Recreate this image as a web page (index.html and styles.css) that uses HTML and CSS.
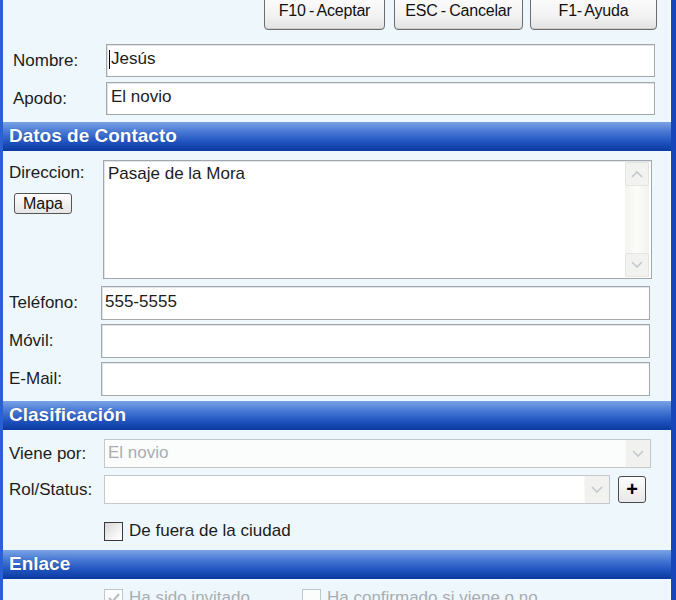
FILE: index.html
```html
<!DOCTYPE html>
<html lang="es">
<head>
    <meta charset="UTF-8">
    <title>Invitado</title>
    <link rel="stylesheet" href="styles.css">
</head>
<body>
<div class="window">
    <!-- barra de botones -->
    <div class="toolbar">
        <button class="btn btn-ok">F10 - Aceptar</button>
        <button class="btn btn-cancel">ESC - Cancelar</button>
        <button class="btn btn-help">F1- Ayuda</button>
    </div>

    <div class="section top">
        <div class="row">
            <span class="label">Nombre:</span>
            <div class="field"><span class="caret"></span>Jesús</div>
        </div>
        <div class="row">
            <span class="label">Apodo:</span>
            <div class="field">El novio</div>
        </div>
    </div>

    <div class="header header-contact">Datos de Contacto</div>
    <div class="section contact">
        <div class="row row-top">
            <div class="label label-dir">
                <span>Direccion:</span>
                <button class="btn-small">Mapa</button>
            </div>
            <div class="textarea">
                <div class="ta-text">Pasaje de la Mora</div>
                <div class="scrollbar">
                    <div class="sb-btn"><svg width="12" height="8" viewBox="0 0 12 8"><path d="M1 7 L6 2 L11 7" fill="none" stroke="#c4c8cc" stroke-width="1.6"/></svg></div>
                    <div class="sb-btn"><svg width="12" height="8" viewBox="0 0 12 8"><path d="M1 1 L6 6 L11 1" fill="none" stroke="#c4c8cc" stroke-width="1.6"/></svg></div>
                </div>
            </div>
        </div>
        <div class="row">
            <span class="label">Teléfono:</span>
            <div class="field">555-5555</div>
        </div>
        <div class="row">
            <span class="label">Móvil:</span>
            <div class="field"></div>
        </div>
        <div class="row">
            <span class="label">E-Mail:</span>
            <div class="field"></div>
        </div>
    </div>

    <div class="header header-class">Clasificación</div>
    <div class="section class">
        <div class="row">
            <span class="label">Viene por:</span>
            <div class="select disabled">
                <span class="sel-text">El novio</span>
                <span class="sel-arrow"><svg width="12" height="8" viewBox="0 0 12 8"><path d="M1 1 L6 6 L11 1" fill="none" stroke="#c4c8cc" stroke-width="1.6"/></svg></span>
            </div>
        </div>
        <div class="row">
            <span class="label">Rol/Status:</span>
            <div class="select select-short">
                <span class="sel-text"></span>
                <span class="sel-arrow"><svg width="12" height="8" viewBox="0 0 12 8"><path d="M1 1 L6 6 L11 1" fill="none" stroke="#c4c8cc" stroke-width="1.6"/></svg></span>
            </div>
            <button class="btn-plus">+</button>
        </div>
        <div class="row row-check">
            <span class="label"></span>
            <span class="check"></span>
            <span class="check-text">De fuera de la ciudad</span>
        </div>
    </div>

    <div class="header header-link">Enlace</div>
    <div class="section link">
        <div class="row row-check">
            <span class="label"></span>
            <span class="check checked"><svg width="14" height="12" viewBox="0 0 14 12"><path d="M2 6 L5.5 9.5 L12 2" fill="none" stroke="#b8bcc0" stroke-width="2"/></svg></span>
            <span class="check-text muted">Ha sido invitado</span>
            <span class="check check-gap"></span>
            <span class="check-text muted">Ha confirmado si viene o no</span>
        </div>
    </div>
</div>
</body>
</html>
```

FILE: styles.css
```css
/* ventana estilo XP */
:root {
    --bg-panel: #eef7fc;
    --border-blue: #2a60d4;
    --field-border: #a3a8ad;
    --text: #1c1c1c;
    --muted: #a9adb1;
}

* {
    box-sizing: border-box;
}

body {
    margin: 0;
    font-family: 'Liberation Sans', Arial, sans-serif;
    font-size: 17px;
    color: var(--text);
    background: var(--bg-panel);
}

.window {
    width: 676px;
    height: 600px;
    overflow: hidden;
    background: var(--bg-panel);
    border-left: 3px solid var(--border-blue);
    border-right: 5px solid #1646bc;
    box-shadow: inset -1px 0 0 #ffffff;
}

/* botones superiores */
.toolbar {
    display: flex;
    justify-content: flex-end;
    height: 38px;
    margin-top: -8px;
    padding-right: 14px;
}

.btn {
    height: 38px;
    padding: 0 0 1px;
    font-family: inherit;
    font-size: 16px;
    letter-spacing: -0.2px;
    word-spacing: -1px;
    color: #111;
    background: linear-gradient(#fefefe 0%, #f3f3f3 60%, #e2e2e2 100%);
    border: 1px solid #6d6d6d;
    border-radius: 4px;
    box-shadow: inset 0 -1px 0 #d0d0d0;
}

.btn-ok { width: 121px; }
.btn-cancel { width: 129px; margin-left: 9px; }
.btn-help { width: 127px; margin-left: 7px; }

.section {
    display: flex;
    flex-direction: column;
}

.row {
    display: flex;
    align-items: center;
}

.field {
    flex: 1;
    height: 33px;
    padding: 0 0 3px 3px;
    display: flex;
    align-items: center;
    background: #fff;
    border: 1px solid var(--field-border);
    box-shadow: inset 1px 1px 0 #e2e5e8;
}

.caret {
    width: 1px;
    height: 19px;
    margin-right: 1px;
    background: #000;
}

/* nombre / apodo */
.top {
    gap: 5px;
    padding: 14px 16px 0 10px;
}

.top .label {
    width: 93px;
}

.top .field {
    padding-left: 2px;
}

.top .row:nth-child(2) .field {
    padding-left: 4px;
}

/* cabeceras de seccion */
.header {
    height: 29px;
    padding: 3px 0 0 6px;
    font-size: 19px;
    font-weight: bold;
    color: #fff;
    background: linear-gradient(#7aa2e4 0%, #4777d4 35%, #1f52be 70%, #0b3a9e 100%);
    text-shadow: 0 0 1px rgba(0, 0, 30, 0.4);
}

.header-contact { margin-top: 7px; }
.header-class { margin-top: 5px; }
.header-link { margin-top: 9px; }

/* contacto */
.contact {
    gap: 4px;
    padding: 9px 21px 0 6px;
}

.contact .label {
    width: 92px;
}

.contact .field {
    height: 34px;
}

.row-top {
    align-items: flex-start;
    margin-bottom: 3px;
}

.label-dir {
    display: flex;
    flex-direction: column;
    align-items: flex-start;
    padding-top: 3px;
}

.contact .label-dir {
    width: 94px;
}

.btn-small {
    width: 58px;
    height: 21px;
    margin: 10px 0 0 5px;
    padding: 0;
    font-family: inherit;
    font-size: 16px;
    line-height: 18px;
    color: #111;
    background: linear-gradient(#fdfdfd, #e6e6e6);
    border: 1px solid #555;
    border-radius: 3px;
}

.textarea {
    flex: 1;
    height: 119px;
    margin-right: -2px;
    display: flex;
    background: #fff;
    border: 1px solid var(--field-border);
    box-shadow: inset 1px 1px 0 #e2e5e8;
}

.ta-text {
    flex: 1;
    padding: 3px 0 0 4px;
}

.scrollbar {
    width: 24px;
    margin: 1px 2px 1px 0;
    display: flex;
    flex-direction: column;
    justify-content: space-between;
    background: linear-gradient(90deg, #f4f4f0, #fcfcfa 50%, #f2f2ee);
}

.sb-btn {
    height: 24px;
    display: flex;
    align-items: center;
    justify-content: center;
    background: #f2f3f1;
    border: 1px solid #e4e5e2;
    border-radius: 2px;
}

/* clasificacion */
.class {
    gap: 7px;
    padding: 9px 0 0 6px;
}

.class .label {
    width: 95px;
}

.select {
    height: 29px;
    width: 547px;
    display: flex;
    background: #fff;
    border: 1px solid #c4c8cc;
}

.select-short {
    width: 506px;
}

.select.disabled {
    background: #fbfcfc;
}

.sel-text {
    flex: 1;
    padding: 3px 0 0 3px;
}

.disabled .sel-text {
    color: var(--muted);
}

.sel-arrow {
    width: 25px;
    display: flex;
    align-items: center;
    justify-content: center;
    background: #f1f1ef;
    border-left: 1px solid #f8f8f6;
}

.btn-plus {
    width: 28px;
    height: 27px;
    margin-left: 8px;
    padding: 0 0 2px;
    font-family: inherit;
    font-size: 20px;
    font-weight: bold;
    line-height: 20px;
    color: #000;
    background: linear-gradient(#fdfdfd, #e8e8e8);
    border: 1px solid #4a4a4a;
    border-radius: 3px;
}

.row-check {
    margin-top: 10px;
}

.check {
    width: 19px;
    height: 19px;
    display: flex;
    align-items: center;
    justify-content: center;
    border: 1px solid #3a3a3a;
    background: linear-gradient(135deg, #d6d6d6, #f7f7f7 70%, #ffffff);
}

.check-text {
    margin-left: 5px;
}

.check + .check-text {
    margin-left: 6px;
}

/* enlace */
.link {
    padding: 9px 0 0 6px;
}

.link .label {
    width: 95px;
}

.link .row-check {
    margin-top: 0;
}

.link .check {
    border-color: #c2c6ca;
    background: #fbfcfc;
}

.check-gap {
    margin-left: 52px;
}

.muted {
    color: var(--muted);
}
```
